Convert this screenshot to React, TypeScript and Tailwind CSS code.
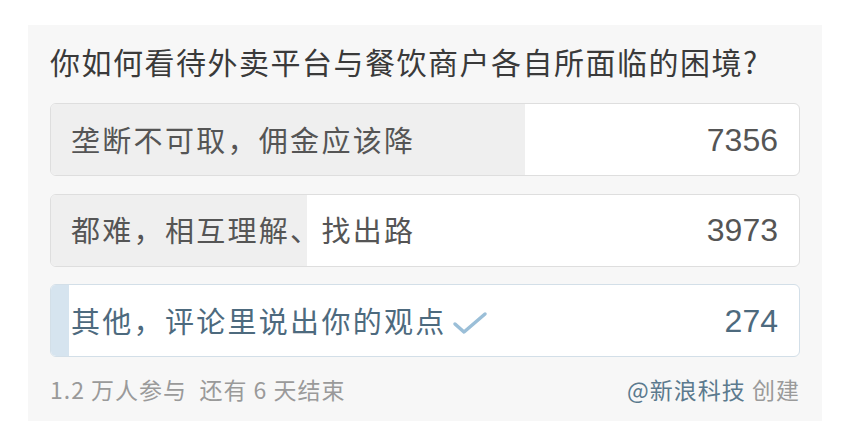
import React from 'react';

const options = [
  { label: '垄断不可取，佣金应该降', votes: 7356, picked: false },
  { label: '都难，相互理解、找出路', votes: 3973, picked: false },
  { label: '其他，评论里说出你的观点', votes: 274, picked: true },
];

const total = options.reduce((s, o) => s + o.votes, 0);

const App = () => {
  return (
    <div
      className="w-[850px] h-[421px] bg-white overflow-hidden"
      style={{ fontFamily: '"Noto Sans CJK SC", "Noto Sans", sans-serif' }}
    >
      <div className="mx-[28px] mt-[25px] h-[396px] bg-[#f7f7f7] px-[22px] pt-[16px]">
        <h1 className="text-[30px] leading-[40px] text-[#3a3a3a] tracking-[1.5px]">
          你如何看待外卖平台与餐饮商户各自所面临的困境?
        </h1>

        <div className="mt-[22px] flex flex-col gap-[17.5px]">
          {options.map((o, i) => (
            <div
              key={i}
              className={`relative h-[73px] rounded-[6px] border overflow-hidden bg-white ${
                o.picked ? 'border-[#d3dfe8]' : 'border-[#dedede]'
              }`}
            >
              <div
                className={`absolute inset-y-0 left-0 ${o.picked ? 'bg-[#d6e4ef]' : 'bg-[#efefef]'}`}
                style={{ width: `${(o.votes / total) * 100}%` }}
              />
              <div className="relative flex h-full items-center justify-between pl-[20px] pr-[21px]">
                <div className="flex items-center">
                  <span
                    className={`text-[29px] tracking-[2.3px] ${o.picked ? 'text-[#4d6a7e]' : 'text-[#555]'}`}
                  >
                    {o.label}
                  </span>
                  {o.picked && (
                    <svg width="38" height="28" viewBox="0 0 38 28" className="ml-[4px] mt-[4px]">
                      <polyline
                        points="4,15 13,23 34,5"
                        fill="none"
                        stroke="#9bbfd8"
                        strokeWidth="3.5"
                        strokeLinecap="round"
                        strokeLinejoin="round"
                      />
                    </svg>
                  )}
                </div>
                <span
                  className={`text-[32px] ${o.picked ? 'text-[#4d6a7e]' : 'text-[#555]'}`}
                  style={{ fontFamily: '"Liberation Sans", Arial, sans-serif' }}
                >
                  {o.votes}
                </span>
              </div>
            </div>
          ))}
        </div>

        <div className="mt-[17px] flex items-center justify-between text-[23px] leading-[30px] tracking-[1px] text-[#9a9a9a]">
          <span>1.2 万人参与&nbsp;&nbsp;还有 6 天结束</span>
          <span>
            <span className="text-[#5b7a8e]">@新浪科技</span> 创建
          </span>
        </div>
      </div>
    </div>
  );
};

export default App;
